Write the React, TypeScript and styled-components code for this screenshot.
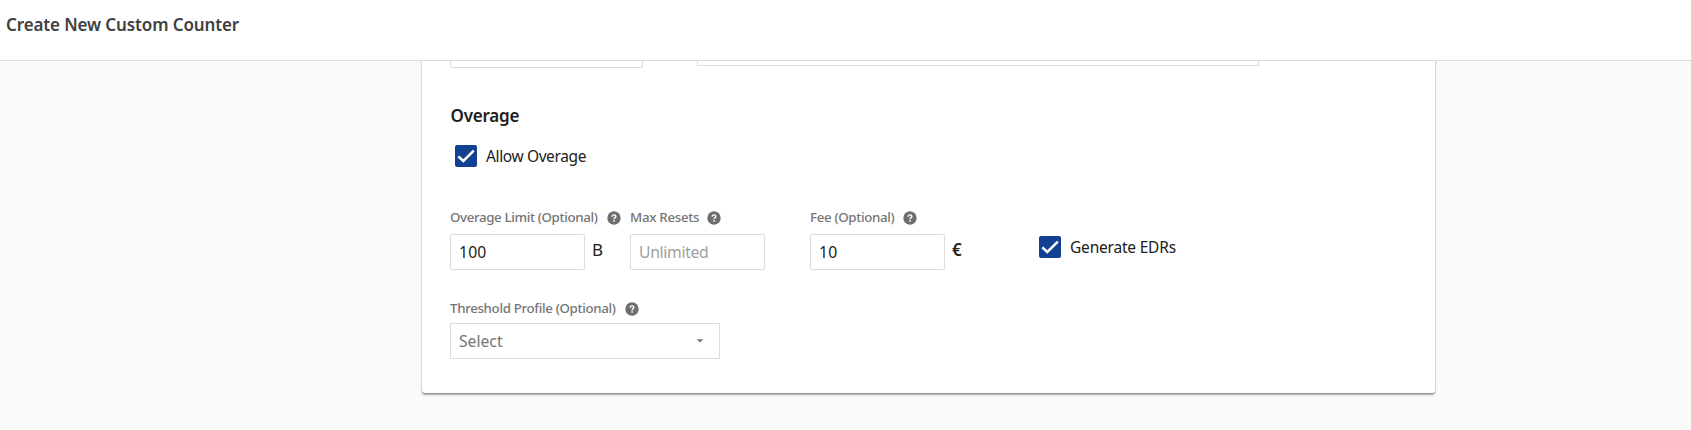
import React, { useState } from 'react';
import styled, { createGlobalStyle } from 'styled-components';

const GlobalStyle = createGlobalStyle`
  *, *::before, *::after { box-sizing: border-box; }
  html, body { margin: 0; height: 100%; overflow: hidden; }
  body {
    background: #fafafa;
    color: #202020;
    font-family: "Noto Sans", "Open Sans", sans-serif;
  }
`;

const Page = styled.div`
  display: flex;
  flex-direction: column;
  height: 430px;
  overflow: hidden;
`;

const Header = styled.header`
  flex: none;
  height: 61px;
  padding: 13px 0 0 6px;
  background: #fff;
  border-bottom: 1px solid #dcdcdc;
`;

const Title = styled.h1`
  margin: 0;
  font-size: 17px;
  line-height: 24px;
  font-weight: 600;
  letter-spacing: -0.12px;
  color: #404040;
`;

const Content = styled.main`
  flex: 1;
  min-height: 0;
  overflow: hidden;
  padding-left: 422px;
`;

const Card = styled.section`
  width: 1013px;
  height: 340px;
  margin-top: -8px;
  padding: 8px 28px 0;
  background: #fff;
  border-radius: 3px;
  box-shadow: 0 2px 2px rgba(0, 0, 0, 0.26), 0 1px 2px rgba(0, 0, 0, 0.28);
`;

const ClippedRow = styled.div`
  display: flex;
  align-items: flex-start;
  gap: 54px;
  height: 37px;
`;

const ClippedField = styled.div<{ $width: number; $height: number; $radius: number }>`
  width: ${(p) => p.$width}px;
  height: ${(p) => p.$height}px;
  border: 1px solid #dcdcdc;
  border-top: 0;
  border-radius: 0 0 ${(p) => p.$radius}px ${(p) => p.$radius}px;
`;

const SectionTitle = styled.h2`
  margin: 0;
  padding: 6px 0 0 0.5px;
  height: 47px;
  font-size: 17px;
  line-height: 24px;
  font-weight: 600;
  letter-spacing: -0.2px;
`;

const CheckLabel = styled.label<{ $spacing: number }>`
  display: flex;
  align-items: center;
  gap: 9px;
  height: 22px;
  font-size: 15.5px;
  line-height: 22px;
  letter-spacing: ${(p) => p.$spacing}px;
  white-space: nowrap;
`;

const CheckInput = styled.input`
  appearance: none;
  position: absolute;
  width: 0;
  height: 0;
  margin: 0;
`;

const CheckBox = styled.span`
  display: flex;
  width: 22px;
  height: 22px;
  border-radius: 2px;
  background: #124191;
`;

const AllowRow = styled.div`
  padding-left: 5px;
  height: 58px;
`;

const FieldRow = styled.div`
  display: flex;
  height: 90px;
`;

const Field = styled.div<{ $width: number }>`
  width: ${(p) => p.$width}px;
`;

const LabelRow = styled.div`
  display: flex;
  align-items: center;
  gap: 10px;
  height: 28px;
  padding-top: 2px;
`;

const FieldLabel = styled.span<{ $width: number; $spacing: number }>`
  width: ${(p) => p.$width}px;
  padding-bottom: 2px;
  font-size: 13.3px;
  line-height: 20px;
  font-weight: 500;
  letter-spacing: ${(p) => p.$spacing}px;
  color: #757575;
  white-space: nowrap;
`;

const InputLine = styled.div`
  display: flex;
  gap: 7px;
  margin-top: 3px;
`;

const TextInput = styled.input`
  width: 135px;
  height: 36px;
  padding: 0 8px 1px;
  border: 1px solid #dcdcdc;
  border-radius: 2px;
  outline: 0;
  background: #fff;
  color: #202020;
  font: 400 15.7px "Noto Sans", sans-serif;
  letter-spacing: 0.2px;
  &::placeholder {
    color: #a0a0a0;
    letter-spacing: -0.3px;
    opacity: 1;
  }
`;

const Unit = styled.span<{ $weight: number }>`
  font-size: 17px;
  line-height: 24px;
  padding-top: 4px;
  font-weight: ${(p) => p.$weight};
`;

const EdrCell = styled.div`
  padding: 33px 0 0 49px;
`;

const Select = styled.button`
  display: flex;
  align-items: center;
  justify-content: space-between;
  width: 270px;
  height: 36px;
  padding: 0 15px 1px 8px;
  border: 1px solid #dcdcdc;
  border-radius: 0;
  background: #fff;
  color: #757575;
  font: 400 15.7px "Noto Sans", sans-serif;
`;

const ProfileLabelRow = styled(LabelRow)`
  height: 30px;
  padding-top: 1px;
`;

const HelpIcon = () => (
  <svg width="14" height="14" viewBox="0 0 14 14" aria-hidden="true">
    <circle cx="7" cy="7" r="6.700" fill="#6e6e6e" />
    <path d="M5.200 5.700C5.200 4.500 6 3.900 7.050 3.900s1.800.6 1.800 1.550C8.850 6.700 7.100 6.600 7.100 8.200" fill="none" stroke="#fff" strokeWidth="1.400" />
    <circle cx="7.100" cy="9.900" r=".85" fill="#fff" />
  </svg>
);

const Caret = () => (
  <svg width="8" height="4" viewBox="0 0 8 4" aria-hidden="true">
    <path d="M.7.200h6.600L4 3.500z" fill="#757575" />
  </svg>
);

function Checkbox({ label, spacing }: { label: string; spacing: number }) {
  const [checked, setChecked] = useState(true);
  return (
    <CheckLabel $spacing={spacing}>
      <CheckInput type="checkbox" checked={checked} onChange={() => setChecked(!checked)} />
      <CheckBox>
        {checked && (
          <svg width="22" height="22" viewBox="0 0 22 22" aria-hidden="true">
            <path d="M3.300 11.300 8.300 16 18.800 5.700" fill="none" stroke="#fff" strokeWidth="2.500" />
          </svg>
        )}
      </CheckBox>
      {label}
    </CheckLabel>
  );
}

export default function App() {
  return (
    <Page>
      <GlobalStyle />
      <Header>
        <Title>Create New Custom Counter</Title>
      </Header>
      <Content>
        <Card>
          <ClippedRow>
            <ClippedField $width={193} $height={7} $radius={2} />
            <ClippedField $width={562} $height={5} $radius={0} />
          </ClippedRow>
          <SectionTitle>Overage</SectionTitle>
          <AllowRow>
            <Checkbox label="Allow Overage" spacing={-0.38} />
          </AllowRow>
          <FieldRow>
            <Field $width={180}>
              <LabelRow>
                <FieldLabel $width={147} $spacing={-0.36}>Overage Limit (Optional)</FieldLabel>
                <HelpIcon />
              </LabelRow>
              <InputLine>
                <TextInput defaultValue="100" aria-label="Overage Limit" />
                <Unit $weight={400}>B</Unit>
              </InputLine>
            </Field>
            <Field $width={180}>
              <LabelRow>
                <FieldLabel $width={67} $spacing={-0.3}>Max Resets</FieldLabel>
                <HelpIcon />
              </LabelRow>
              <InputLine>
                <TextInput placeholder="Unlimited" aria-label="Max Resets" />
              </InputLine>
            </Field>
            <Field $width={180}>
              <LabelRow>
                <FieldLabel $width={83} $spacing={-0.34}>Fee (Optional)</FieldLabel>
                <HelpIcon />
              </LabelRow>
              <InputLine>
                <TextInput defaultValue="10" aria-label="Fee" />
                <Unit $weight={600}>€</Unit>
              </InputLine>
            </Field>
            <EdrCell>
              <Checkbox label="Generate EDRs" spacing={-0.2} />
            </EdrCell>
          </FieldRow>
          <ProfileLabelRow>
            <FieldLabel $width={165} $spacing={-0.33}>Threshold Profile (Optional)</FieldLabel>
            <HelpIcon />
          </ProfileLabelRow>
          <Select type="button">
            Select
            <Caret />
          </Select>
        </Card>
      </Content>
    </Page>
  );
}
